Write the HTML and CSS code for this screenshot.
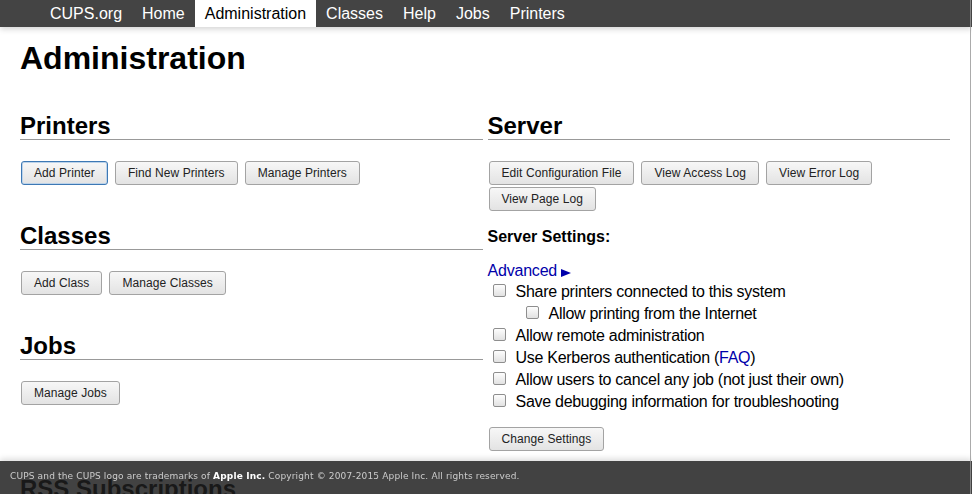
FILE: index.html
```html
<!DOCTYPE html>
<html lang="en">
<head>
<meta charset="utf-8">
<title>Administration - CUPS</title>
<link rel="stylesheet" href="styles.css">
</head>
<body>
<header class="topbar">
  <ul class="nav">
    <li><a class="nav-link" href="#">CUPS.org</a></li>
    <li><a class="nav-link" href="#">Home</a></li>
    <li><a class="nav-link active" href="#">Administration</a></li>
    <li><a class="nav-link" href="#">Classes</a></li>
    <li><a class="nav-link" href="#">Help</a></li>
    <li><a class="nav-link" href="#">Jobs</a></li>
    <li><a class="nav-link" href="#">Printers</a></li>
  </ul>
</header>
<main class="page">
  <h1 class="title">Administration</h1>
  <div class="columns">
    <div class="col">
      <section class="section">
        <h2 class="section-title">Printers</h2>
        <div class="btn-row">
          <button class="btn btn-focus" type="button">Add Printer</button>
          <button class="btn" type="button">Find New Printers</button>
          <button class="btn" type="button">Manage Printers</button>
        </div>
      </section>
      <section class="section">
        <h2 class="section-title">Classes</h2>
        <div class="btn-row">
          <button class="btn" type="button">Add Class</button>
          <button class="btn" type="button">Manage Classes</button>
        </div>
      </section>
      <section class="section">
        <h2 class="section-title">Jobs</h2>
        <div class="btn-row">
          <button class="btn" type="button">Manage Jobs</button>
        </div>
      </section>
    </div>
    <div class="col">
      <section class="section">
        <h2 class="section-title">Server</h2>
        <div class="btn-row">
          <button class="btn" type="button">Edit Configuration File</button>
          <button class="btn" type="button">View Access Log</button>
          <button class="btn" type="button">View Error Log</button>
          <button class="btn" type="button">View Page Log</button>
        </div>
        <form class="settings">
          <div class="settings-title">Server Settings:</div>
          <div class="advanced"><a class="link" href="#">Advanced <span class="tri"></span></a></div>
          <label class="check-row"><input class="check" type="checkbox"><span>Share printers connected to this system</span></label>
          <label class="check-row indent"><input class="check" type="checkbox"><span>Allow printing from the Internet</span></label>
          <label class="check-row"><input class="check" type="checkbox"><span>Allow remote administration</span></label>
          <label class="check-row"><input class="check" type="checkbox"><span>Use Kerberos authentication (<a class="link" href="#">FAQ</a>)</span></label>
          <label class="check-row"><input class="check" type="checkbox"><span>Allow users to cancel any job (not just their own)</span></label>
          <label class="check-row"><input class="check" type="checkbox"><span>Save debugging information for troubleshooting</span></label>
          <div class="settings-submit">
            <button class="btn" type="button">Change Settings</button>
          </div>
        </form>
      </section>
    </div>
  </div>
  <h2 class="section-title rss">RSS Subscriptions</h2>
</main>
<footer class="footer">CUPS and the CUPS logo are trademarks of <b class="footer-strong">Apple Inc.</b> Copyright © 2007-2015 Apple Inc. All rights reserved.</footer>
</body>
</html>
```

FILE: styles.css
```css
html {
  overflow: hidden;
}

body {
  margin: 0;
  font-family: "Liberation Sans", Arial, sans-serif;
  color: #000;
  background: #fff;
}

body::after {
  content: "";
  position: fixed;
  top: 0;
  bottom: 0;
  right: 1px;
  width: 1px;
  background: rgba(150, 150, 150, 0.8);
  z-index: 5;
}

.topbar {
  height: 27px;
  background: #444;
  box-shadow: 0 2px 6px rgba(0, 0, 0, 0.18);
  position: relative;
  z-index: 2;
}

.nav {
  list-style: none;
  margin: 0;
  padding: 0 0 0 40px;
  display: flex;
}

.nav-link {
  display: block;
  padding: 0 10px;
  line-height: 27px;
  font-size: 16px;
  color: #fff;
  text-decoration: none;
}

.nav-link.active {
  background: #fff;
  color: #000;
}

.page {
  padding: 0 22px 0 20px;
}

.title {
  font-size: 32px;
  line-height: 38px;
  margin: 12px 0 0;
  font-weight: bold;
}

.columns {
  display: grid;
  grid-template-columns: 1fr 1fr;
  column-gap: 5px;
  margin-top: 35px;
  align-items: start;
}

.section-title {
  font-size: 24px;
  line-height: 27px;
  margin: 0;
  font-weight: bold;
  border-bottom: 1px solid #999;
}

.section + .section {
  margin-top: 37px;
}

.btn-row {
  display: flex;
  flex-wrap: wrap;
  gap: 2px 7px;
  margin-top: 21px;
  padding-left: 1px;
}

.btn {
  font-family: "Liberation Sans", Arial, sans-serif;
  font-size: 12px;
  letter-spacing: 0.08px;
  height: 24px;
  padding: 0 12px;
  margin: 0;
  border: 1px solid #a3a3a3;
  border-radius: 3px;
  background: linear-gradient(#f7f7f7, #e3e3e3);
  color: #222;
}

.btn-focus {
  border-color: #3d78b4;
  box-shadow: inset 0 0 0 1px #bcd3ea;
}

.settings-title {
  font-size: 16px;
  font-weight: bold;
  line-height: 22px;
  margin-top: 15px;
}

.advanced {
  font-size: 16px;
  line-height: 21px;
  margin-top: 12px;
  letter-spacing: -0.2px;
}

.link {
  color: #00a;
  text-decoration: none;
}

.tri {
  display: inline-block;
  width: 0;
  height: 0;
  border-left: 10px solid #00a;
  border-top: 4.5px solid transparent;
  border-bottom: 4.5px solid transparent;
  vertical-align: -1px;
}

.check-row {
  display: flex;
  align-items: flex-start;
  font-size: 16px;
  line-height: 22px;
  letter-spacing: -0.28px;
  padding-left: 5px;
}

.check-row.indent {
  padding-left: 38px;
}

.check {
  appearance: none;
  -webkit-appearance: none;
  box-sizing: border-box;
  flex: none;
  width: 13px;
  height: 13px;
  margin: 3px 10px 0 0;
  border: 1px solid #8e8e8e;
  border-radius: 2px;
  background: linear-gradient(#fdfdfd, #e2e2e2);
}

.settings-submit {
  margin-top: 14px;
  padding-left: 1px;
}

.rss {
  margin-top: 24px;
  border-bottom: none;
}

.footer {
  position: fixed;
  left: 0;
  right: 0;
  bottom: 0;
  height: 33px;
  padding: 0 0 0 10px;
  background: rgba(30, 30, 30, 0.84);
  box-shadow: 0 -2px 6px rgba(0, 0, 0, 0.15);
  color: #ccc;
  font-family: "DejaVu Sans", Verdana, sans-serif;
  font-size: 9px;
  letter-spacing: 0.15px;
  line-height: 30px;
  z-index: 3;
}

.footer-strong {
  color: #fff;
  font-weight: bold;
}
```
